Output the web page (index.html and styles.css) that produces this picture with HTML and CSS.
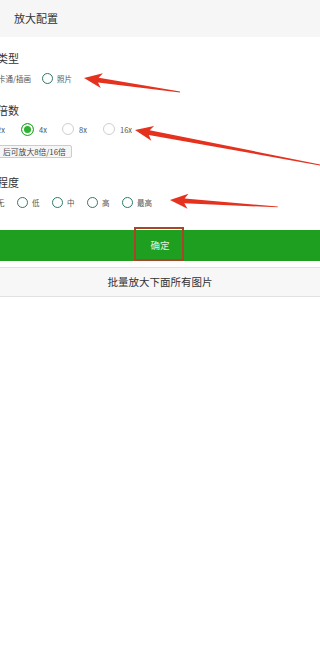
FILE: index.html
```html
<!DOCTYPE html>
<html lang="zh">
<head>
<meta charset="utf-8">
<title>放大配置</title>
<link rel="stylesheet" href="styles.css">
</head>
<body>
<div class="page">
  <div class="header">放大配置</div>

  <div class="label label-1">类型</div>
  <div class="row row-1">
    <div class="opt opt-w1"><span class="radio radio-dark"></span><span class="opt-text">卡通/插画</span></div>
    <div class="opt"><span class="radio radio-dark"></span><span class="opt-text">照片</span></div>
  </div>

  <div class="label label-2">倍数</div>
  <div class="row row-2">
    <div class="opt opt-w2"><span class="radio radio-big radio-off"></span><span class="opt-text opt-gap5">2x</span></div>
    <div class="opt opt-w2"><span class="radio radio-big radio-on"></span><span class="opt-text opt-gap5">4x</span></div>
    <div class="opt opt-w2"><span class="radio radio-big radio-off"></span><span class="opt-text opt-gap5">8x</span></div>
    <div class="opt opt-w2"><span class="radio radio-big radio-off"></span><span class="opt-text opt-gap5">16x</span></div>
  </div>
  <div class="hint">后可放大8倍/16倍</div>

  <div class="label label-3">程度</div>
  <div class="row row-3">
    <div class="opt opt-w3"><span class="radio radio-dark"></span><span class="opt-text">无</span></div>
    <div class="opt opt-w3"><span class="radio radio-dark"></span><span class="opt-text">低</span></div>
    <div class="opt opt-w3"><span class="radio radio-dark"></span><span class="opt-text">中</span></div>
    <div class="opt opt-w3"><span class="radio radio-dark"></span><span class="opt-text">高</span></div>
    <div class="opt opt-w3"><span class="radio radio-dark"></span><span class="opt-text">最高</span></div>
  </div>

  <div class="btn-ok">确定</div>
  <div class="btn-batch">批量放大下面所有图片</div>

  <svg class="annot" width="320" height="300" viewBox="0 0 320 300">
    <polygon fill="#e4321f" transform="translate(84,78) rotate(8.3)" points="0,0 18,-7.5 14.5,-2.4 97,-0.4 97,0.4 14.5,2.4 18,7.5"/>
    <polygon fill="#e4321f" transform="translate(135,130) rotate(10.7)" points="0,0 18,-7.5 14.5,-2.4 192,-0.5 192,0.5 14.5,2.4 18,7.5"/>
    <polygon fill="#e4321f" transform="translate(170,200) rotate(3.7)" points="0,0 18,-7.5 14.5,-2.4 108,-0.4 108,0.4 14.5,2.4 18,7.5"/>
    <rect x="135" y="228" width="48" height="32" fill="none" stroke="#a8452c" stroke-width="2"/>
  </svg>
</div>
</body>
</html>
```

FILE: styles.css
```css
html, body {
  margin: 0;
  padding: 0;
  background: #ffffff;
}

body {
  font-family: "Noto Sans CJK SC", "Noto Sans", sans-serif;
  color: #333333;
  width: 320px;
  overflow: hidden;
}

.page {
  position: relative;
  width: 320px;
  min-height: 650px;
}

.header {
  height: 37px;
  line-height: 37px;
  padding-left: 14px;
  background: #f6f6f6;
  font-size: 11px;
  color: #333333;
}

.label {
  height: 14px;
  line-height: 14px;
  font-size: 11px;
  color: #333333;
  margin-left: -3px;
  white-space: nowrap;
}

.label-1 { margin-top: 14px; }
.label-2 { margin-top: 18px; }
.label-3 { margin-top: 15px; }

.row {
  display: flex;
  align-items: center;
  height: 14px;
  white-space: nowrap;
}

.row-1 { margin-top: 6px; margin-left: -17px; }
.row-2 { margin-top: 5px; margin-left: -20px; }
.row-3 { margin-top: 6px; margin-left: -18px; }

.opt {
  display: flex;
  align-items: center;
  flex: none;
}

.opt-w1 { width: 59px; }
.opt-w2 { width: 41px; }
.opt-w3 { width: 35px; }

.radio {
  display: block;
  flex: none;
  width: 11px;
  height: 11px;
  box-sizing: border-box;
  border-radius: 50%;
}

.radio-big {
  width: 12px;
  height: 12px;
}

.radio-dark {
  border: 1.5px solid #2f7a66;
}

.radio-off {
  border: 1px solid #cfcfcf;
}

.radio-on {
  width: 13px;
  height: 13px;
  border: 1.5px solid #2fa332;
  background: #2db232;
  box-shadow: inset 0 0 0 2px #ffffff;
}

.opt-text {
  margin-left: 4px;
  font-size: 7.5px;
  color: #555555;
}

.opt-gap5 { margin-left: 5px; }

.hint {
  display: inline-block;
  margin-top: 9px;
  margin-left: -3px;
  height: 13px;
  line-height: 11px;
  box-sizing: border-box;
  padding: 0 5px 0 5px;
  border: 1px solid #cccccc;
  border-radius: 2px;
  background: #f6f6f6;
  font-size: 7.8px;
  color: #444444;
  white-space: nowrap;
  vertical-align: top;
}

.btn-ok {
  margin-top: 21px;
  height: 31px;
  line-height: 31px;
  background: #1f9f1f;
  color: #e3f4dc;
  text-align: center;
  font-size: 9.5px;
}

.btn-batch {
  margin-top: 6px;
  height: 30px;
  line-height: 28px;
  box-sizing: border-box;
  border-top: 1px solid #e2e2e2;
  border-bottom: 1px solid #e2e2e2;
  background: #f7f7f7;
  text-align: center;
  font-size: 10.5px;
  color: #333333;
}

.annot {
  position: absolute;
  left: 0;
  top: 0;
  pointer-events: none;
}
```
